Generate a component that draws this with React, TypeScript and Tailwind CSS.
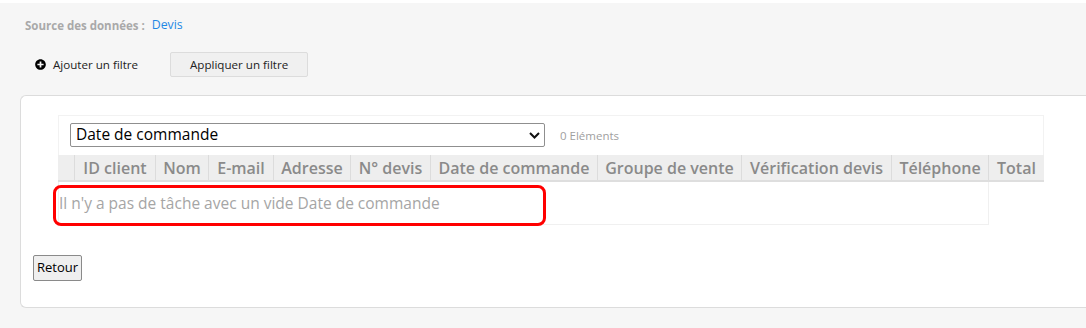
import { FaPlusCircle } from "react-icons/fa";

const columns = [
	{ label: "", w: "w-[16px]" },
	{ label: "ID client", w: "w-[81px]" },
	{ label: "Nom", w: "w-[53px]" },
	{ label: "E-mail", w: "w-[65px]" },
	{ label: "Adresse", w: "w-[77px]" },
	{ label: "N° devis", w: "w-[80px]" },
	{ label: "Date de commande", w: "w-[167px]" },
	{ label: "Groupe de vente", w: "w-[144px]" },
	{ label: "Vérification devis", w: "w-[150px]" },
	{ label: "Téléphone", w: "w-[97px]" },
	{ label: "Total", w: "w-[56px]" },
];

export default function App() {
	return (
		<div className="w-[1086px] h-[328px] bg-white pt-[3px] overflow-hidden font-['Open_Sans',sans-serif]">
			<div className="h-[325px] bg-[#f6f6f6] pl-[20px]">
				<div className="h-[45px] pl-[5px] flex items-center gap-[7px]">
					<span className="text-[11.5px] font-bold text-[#a9a9a9]">Source des données :</span>
					<span className="text-[12.3px] text-[#1e88e5]">Devis</span>
				</div>
				<div className="h-[47px] pl-[15px] pt-[4px] flex items-start">
					<div className="h-[25px] flex items-center gap-[7px] text-[11.6px] text-[#222]">
						<FaPlusCircle className="w-[11px] h-[11px] text-black" />
						<span>Ajouter un filtre</span>
					</div>
					<button className="ml-[32px] w-[138px] h-[25px] bg-[#f0f0f0] border border-[#dcdcdc] rounded-[2px] text-[11.6px] text-[#222]">
						Appliquer un filtre
					</button>
				</div>
				<div className="h-[213px] bg-white border border-[#dcdcdc] border-r-0 rounded-l-[6px] pt-[19px] pl-[37px]">
					<div className="w-[986px]">
						<div className="h-[40px] border border-b-0 border-[#f2f2f2] pl-[11px] pt-[7px] flex items-start gap-[15px]">
							<div className="w-[475px] h-[24px] border border-[#8f8f8f] rounded-[2px] flex items-center justify-between pl-[5px] pr-[4px] text-[15.5px] text-black leading-none">
								<span>Date de commande</span>
								<svg width="11" height="7" viewBox="0 0 11 7">
									<path d="M1 1l4.5 4.5L10 1" stroke="#111" strokeWidth="2" fill="none" />
								</svg>
							</div>
							<span className="text-[11.5px] text-[#a0a0a0] leading-[26px]">0 Eléments</span>
						</div>
						<div className="flex h-[27px] bg-[#eeeeee] border-b-2 border-[#dedede]">
							{columns.map((c, i) => (
								<div
									key={i}
									className={`${c.w} shrink-0 flex items-center justify-center text-[16px] font-semibold text-[#8a8a8a] whitespace-nowrap ${i > 0 ? "border-l border-[#dcdcdc]" : ""}`}
								>
									{c.label}
								</div>
							))}
						</div>
						<div className="w-[931px] h-[43px] border border-t-0 border-[#f0f0f0] relative">
							<div className="absolute left-[-6px] top-[3px] w-[493px] h-[41px] border-[3px] border-[#ff0000] rounded-[8px]" />
							<div className="pt-[10px] text-[15.5px] text-[#a5a5a5] leading-[22px]">
								Il n'y a pas de tâche avec un vide Date de commande
							</div>
						</div>
					</div>
					<button className="mt-[30px] ml-[-25px] h-[26px] px-[3px] bg-[#efefef] border border-[#8a8a8a] rounded-[2px] text-[13px] text-black">
						Retour
					</button>
				</div>
			</div>
		</div>
	);
}
